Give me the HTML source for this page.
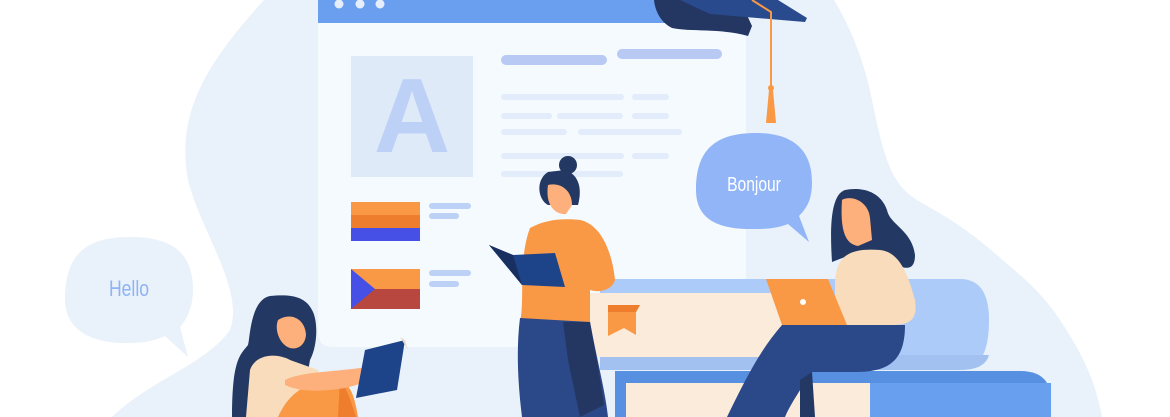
<!DOCTYPE html>
<html><head><meta charset="utf-8"><style>
html,body{margin:0;padding:0;background:#fff;width:1170px;height:417px;overflow:hidden}
svg{display:block}
</style></head><body>
<svg width="1170" height="417" viewBox="0 0 1170 417" xmlns="http://www.w3.org/2000/svg">
<!-- background blob -->
<path d="M264 0 L834 0 C855 35 866 70 872 100 C882 150 890 180 910 195 C925 207 950 215 991 250 C1020 275 1040 290 1060 320 C1083 355 1095 380 1102 417 L112 417 C150 380 205 365 230 330 C245 290 200 230 188 180 C175 110 210 60 264 0 Z" fill="#E9F1FA"/>
<!-- window -->
<path d="M318 0 H746 V347 H333 Q318 347 318 332 Z" fill="#F5FAFE"/>
<rect x="318" y="0" width="428" height="23" fill="#6A9EEE"/>
<circle cx="339" cy="4" r="4.5" fill="#E6EEFC"/><circle cx="360" cy="4" r="4.5" fill="#E6EEFC"/><circle cx="380" cy="4" r="4.5" fill="#E6EEFC"/>
<rect x="351" y="56" width="122" height="121" fill="#DFEAF9"/>
<text x="412" y="152" text-anchor="middle" font-family="Liberation Sans, sans-serif" font-weight="bold" font-size="106" fill="#BDD0F6">A</text>
<rect x="351" y="202" width="69" height="13" fill="#F99845"/><rect x="351" y="215" width="69" height="13" fill="#EE7D2E"/><rect x="351" y="228" width="69" height="13" fill="#4650E6"/>
<rect x="351" y="269" width="69" height="20" fill="#F99845"/><rect x="351" y="289" width="69" height="20" fill="#B8473F"/><path d="M351 269 L375 289 L351 309 Z" fill="#4650E6"/>
<g fill="#BDD0F6"><rect x="429" y="203" width="42" height="6" rx="3"/><rect x="429" y="213" width="30" height="6" rx="3"/><rect x="429" y="270" width="42" height="6" rx="3"/><rect x="429" y="281" width="30" height="6" rx="3"/></g>
<g fill="#B8C9F4"><rect x="501" y="55" width="106" height="10" rx="5"/><rect x="617" y="49" width="105" height="10" rx="5"/></g>
<g fill="#E2ECFB"><rect x="501" y="94" width="123" height="6" rx="3"/><rect x="632" y="94" width="37" height="6" rx="3"/>
<rect x="501" y="113" width="51" height="6" rx="3"/><rect x="557" y="113" width="66" height="6" rx="3"/><rect x="632" y="113" width="37" height="6" rx="3"/>
<rect x="501" y="129" width="66" height="6" rx="3"/><rect x="578" y="129" width="104" height="6" rx="3"/>
<rect x="501" y="153" width="123" height="6" rx="3"/><rect x="632" y="153" width="37" height="6" rx="3"/>
<rect x="501" y="171" width="122" height="6" rx="3"/></g>
<!-- grad cap -->
<path d="M654 0 H740 L752 26 L748 36 C720 28 690 32 672 28 C660 22 655 10 654 0 Z" fill="#243763"/>
<path d="M680 0 H778 L807 18 L805 22 L710 14 Z" fill="#2A4A8E"/>
<path d="M752 0 L771 12 L771 88" stroke="#F99845" stroke-width="2" fill="none"/>
<circle cx="771" cy="88" r="3" fill="#F99845"/>
<path d="M769 90 L773 90 L776 123 L766 123 Z" fill="#F99845"/>
<!-- hello bubble -->
<path d="M130 237 C175 237 193 255 193 290 C193 305 188 318 180 327 L188 357 L165 336 C150 343 135 343 125 343 C85 343 65 325 65 300 C65 255 85 237 130 237 Z" fill="#E9F1FA"/>
<text x="129" y="296" text-anchor="middle" font-family="Liberation Sans Narrow, Liberation Sans, sans-serif" font-size="22" fill="#8FB3F5" transform="translate(129 0) scale(0.8 1) translate(-129 0)">Hello</text>
<!-- bonjour bubble -->
<path d="M756 133 C795 133 812 152 812 182 C812 198 808 207 799 216 L809 242 L788 224 C775 229 765 229 750 229 C712 229 696 215 696 190 C696 150 715 133 756 133 Z" fill="#92B5F7"/>
<text x="754" y="191" text-anchor="middle" font-family="Liberation Sans, sans-serif" font-size="20" fill="#fff" transform="translate(754 0) scale(0.78 1) translate(-754 0)">Bonjour</text>
<!-- books -->
<path d="M600 279 H960 Q989 279 989 320 Q989 370 960 370 H600 Z" fill="#ADCBF8"/>
<path d="M600 355 H989 Q985 370 960 370 H600 Z" fill="#A2C1F0"/>
<rect x="588" y="293" width="240" height="64" fill="#FBEBDA"/>
<path d="M608 305 H640 L636 312 V335 L624 328 L608 336 Z" fill="#F99845"/><path d="M608 305 H640 L636 312 H608 Z" fill="#EE7D2E"/>
<path d="M615 371 H1020 Q1051 371 1051 400 V417 H615 Z" fill="#5790E0"/>
<rect x="870" y="383" width="181" height="34" fill="#689FEE"/>
<rect x="626" y="383" width="244" height="34" fill="#FBEBDA"/>
<!-- right woman -->
<path d="M845 190 C830 195 830 230 832 262 L850 255 L885 258 C900 268 915 275 915 255 C912 230 890 225 887 210 C880 190 860 187 845 190 Z" fill="#233862"/>
<path d="M842 200 C850 195 868 200 870 218 L872 240 L858 246 C845 244 840 230 842 200 Z" fill="#FDB07C"/>
<path d="M835 285 C835 255 850 248 880 250 C900 252 908 275 915 300 C918 320 910 325 890 325 L835 325 Z" fill="#F8DCBC"/>
<path d="M782 325 L905 325 C905 360 890 372 855 372 L812 372 C800 390 790 405 785 417 L727 417 C745 380 760 350 782 325 Z" fill="#2B4889"/>
<path d="M800 380 L812 372 L815 417 L800 417 Z" fill="#233862"/>
<path d="M766 279 L828 279 L847 325 L782 325 Z" fill="#F99845"/>
<circle cx="803" cy="302" r="3" fill="#fff"/>
<!-- middle woman -->
<circle cx="568" cy="165" r="9" fill="#233862"/>
<path d="M548 172 C535 180 538 200 548 205 L578 205 C582 190 580 175 565 170 Z" fill="#233862"/>
<path d="M548 185 C560 182 572 190 572 205 L566 214 C555 215 545 205 548 185 Z" fill="#FDB07C"/>
<path d="M530 228 C545 220 560 218 580 220 C600 224 612 250 615 280 C612 290 600 293 590 290 L590 325 L520 322 C525 300 518 260 530 228 Z" fill="#F99845"/>
<path d="M520 318 L590 322 C597 360 605 390 608 417 L522 417 C518 385 516 350 520 318 Z" fill="#2B4889"/>
<path d="M563 322 L590 322 C597 360 602 390 604 405 L580 417 L568 360 Z" fill="#243763"/>
<path d="M489 245 L513 255 L555 253 L565 287 L522 285 Z" fill="#1D4488"/>
<path d="M489 245 L513 255 L522 285 Z" fill="#18305F"/>
<!-- left woman -->
<path d="M270 296 C250 300 250 340 248 345 C240 355 232 360 232 417 L300 417 L310 360 C318 345 318 320 312 310 C305 296 290 294 270 296 Z" fill="#233862"/>
<path d="M278 320 C290 312 305 318 306 335 C305 345 298 350 290 348 C280 345 274 330 278 320 Z" fill="#FDB07C"/>
<path d="M250 370 C255 355 275 352 290 360 L318 370 L330 417 L246 417 Z" fill="#F8DCBC"/>
<path d="M278 417 C290 390 310 380 340 380 C352 385 355 400 358 417 Z" fill="#F99845"/>
<path d="M340 380 C348 390 352 405 356 417 L338 417 Z" fill="#EE7D2E"/>
<path d="M285 380 C300 372 330 372 360 368 L372 370 C370 380 360 385 345 388 C320 392 300 392 285 385 Z" fill="#FDB07C"/>
<path d="M365 350 L405 340 L397 390 L356 398 Z" fill="#1D4488"/>
<path d="M400 337 L408 350 L405 340 Z" fill="#EADBCB"/>
</svg>
</body></html>
